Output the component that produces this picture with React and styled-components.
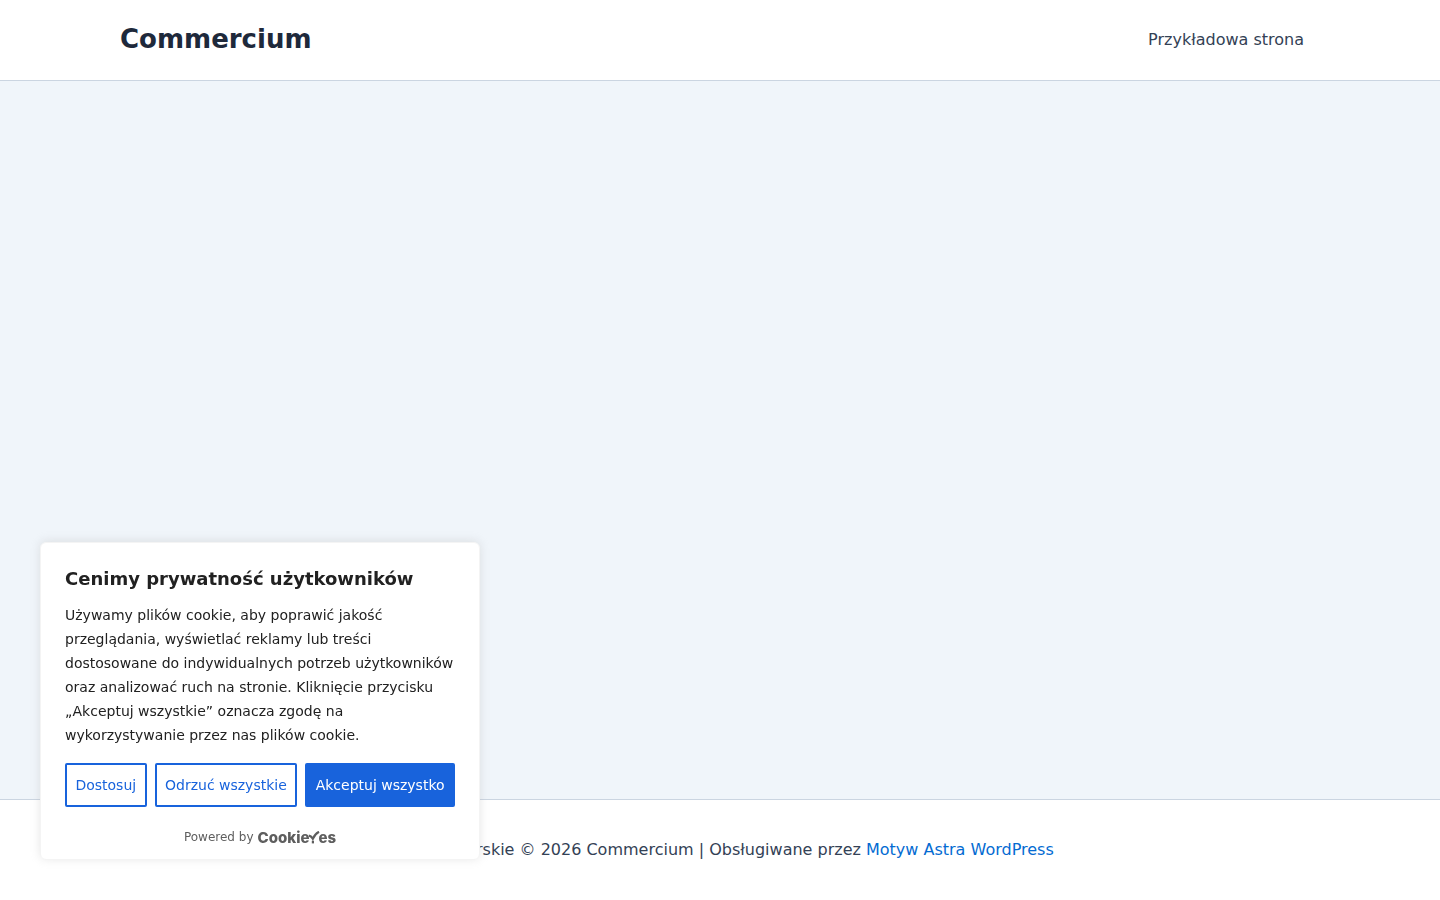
import styled, { createGlobalStyle } from 'styled-components'

const GlobalStyle = createGlobalStyle`
    * {
        box-sizing: border-box;
    }

    body {
        margin: 0;
        background-color: #f0f5fa;
        color: #334155;
        font-family: "DejaVu Sans", sans-serif;
        font-size: 16px;
        line-height: 26px;
    }

    a {
        text-decoration: none;
    }
`

const Page = styled.div`
    display: flex;
    flex-direction: column;
    min-height: 100vh;
`

const Header = styled.header`
    background-color: #ffffff;
    border-bottom: 1px solid #cbd5e1;
`

const Container = styled.div`
    display: flex;
    align-items: center;
    justify-content: ${({ $center }) => ($center ? 'center' : 'space-between')};
    max-width: 1240px;
    min-height: ${({ $center }) => ($center ? '100px' : '80px')};
    margin: 0 auto;
    padding: 0 20px;
`

const SiteTitle = styled.a`
    padding-bottom: 2px;
    color: #1e293b;
    font-size: 26px;
    font-weight: 700;
    line-height: 32px;
`

const MenuLink = styled.a`
    padding: 0 16px;
    color: #334155;
`

const Content = styled.main`
    flex: 1;
`

const Footer = styled.footer`
    background-color: #ffffff;
    border-top: 1px solid #cbd5e1;

    & p {
        margin: 0;
    }

    & a {
        color: #046bd2;
    }
`

const Banner = styled.section`
    position: fixed;
    left: 40px;
    bottom: 40px;
    width: 440px;
    max-width: calc(100% - 80px);
    padding: 24px 24px 10px;
    background-color: #ffffff;
    border: 1px solid #f4f4f4;
    border-radius: 6px;
    box-shadow: 0 -1px 10px 0 rgba(172, 171, 171, 0.3);
    color: #212121;
`

const BannerTitle = styled.h2`
    margin: 0 0 12px;
    font-size: 18px;
    font-weight: 700;
    line-height: 24px;
`

const BannerText = styled.p`
    margin: 0 0 16px;
    font-size: 14px;
    line-height: 24px;
`

const Actions = styled.div`
    display: flex;
    gap: 8px;
`

const Button = styled.button`
    flex: auto;
    padding: 8px;
    background-color: ${({ $filled }) => ($filled ? '#1863dc' : 'transparent')};
    border: 2px solid #1863dc;
    border-radius: 2px;
    color: ${({ $filled }) => ($filled ? '#ffffff' : '#1863dc')};
    font-family: inherit;
    font-size: 14px;
    line-height: 24px;
    white-space: nowrap;
    cursor: pointer;
`

const PoweredBy = styled.div`
    display: flex;
    align-items: center;
    justify-content: center;
    gap: 4px;
    margin-top: 18px;
    color: #5e5e5e;
    font-size: 12px;
    line-height: 24px;
`

const Brand = styled.a`
    display: flex;
    align-items: center;
    height: 24px;
    padding-top: 2px;
    color: #5e5e5e;
    font-family: Inter, sans-serif;
    font-size: 15px;
    font-weight: 800;

    & svg {
        margin: 0 -2px 0 -1px;
    }
`

function TickMark() {
    return (
        <svg width="12" height="14" viewBox="0 0 12 14" fill="none" stroke="currentColor" strokeWidth="2.2" aria-hidden="true">
            <path d="M0.8 4.6C2.4 4.8 3.6 5.8 4.8 7.8C6.2 4.6 8.2 2.2 11 0.8" />
            <path d="M4.9 9.8V12.4" />
        </svg>
    )
}

export default function App() {
    return (
        <>
            <GlobalStyle />

            <Page>
                <Header>
                    <Container>
                        <SiteTitle href="#">Commercium</SiteTitle>
                        <nav>
                            <MenuLink href="#">Przykładowa strona</MenuLink>
                        </nav>
                    </Container>
                </Header>

                <Content />

                <Footer>
                    <Container $center>
                        <p>
                            Prawa autorskie © 2026 Commercium | Obsługiwane przez <a href="#">Motyw Astra WordPress</a>
                        </p>
                    </Container>
                </Footer>
            </Page>

            <Banner aria-labelledby="bannerTitle">
                <BannerTitle id="bannerTitle">Cenimy prywatność użytkowników</BannerTitle>
                <BannerText>
                    Używamy plików cookie, aby poprawić jakość przeglądania, wyświetlać reklamy lub treści
                    dostosowane do indywidualnych potrzeb użytkowników oraz analizować ruch na stronie.
                    Kliknięcie przycisku „Akceptuj wszystkie” oznacza zgodę na wykorzystywanie przez nas
                    plików cookie.
                </BannerText>

                <Actions>
                    <Button type="button">Dostosuj</Button>
                    <Button type="button">Odrzuć wszystkie</Button>
                    <Button type="button" $filled>Akceptuj wszystko</Button>
                </Actions>

                <PoweredBy>
                    Powered by
                    <Brand href="#" aria-label="CookieYes">
                        <span>Cookie</span>
                        <TickMark />
                        <span>es</span>
                    </Brand>
                </PoweredBy>
            </Banner>
        </>
    )
}
